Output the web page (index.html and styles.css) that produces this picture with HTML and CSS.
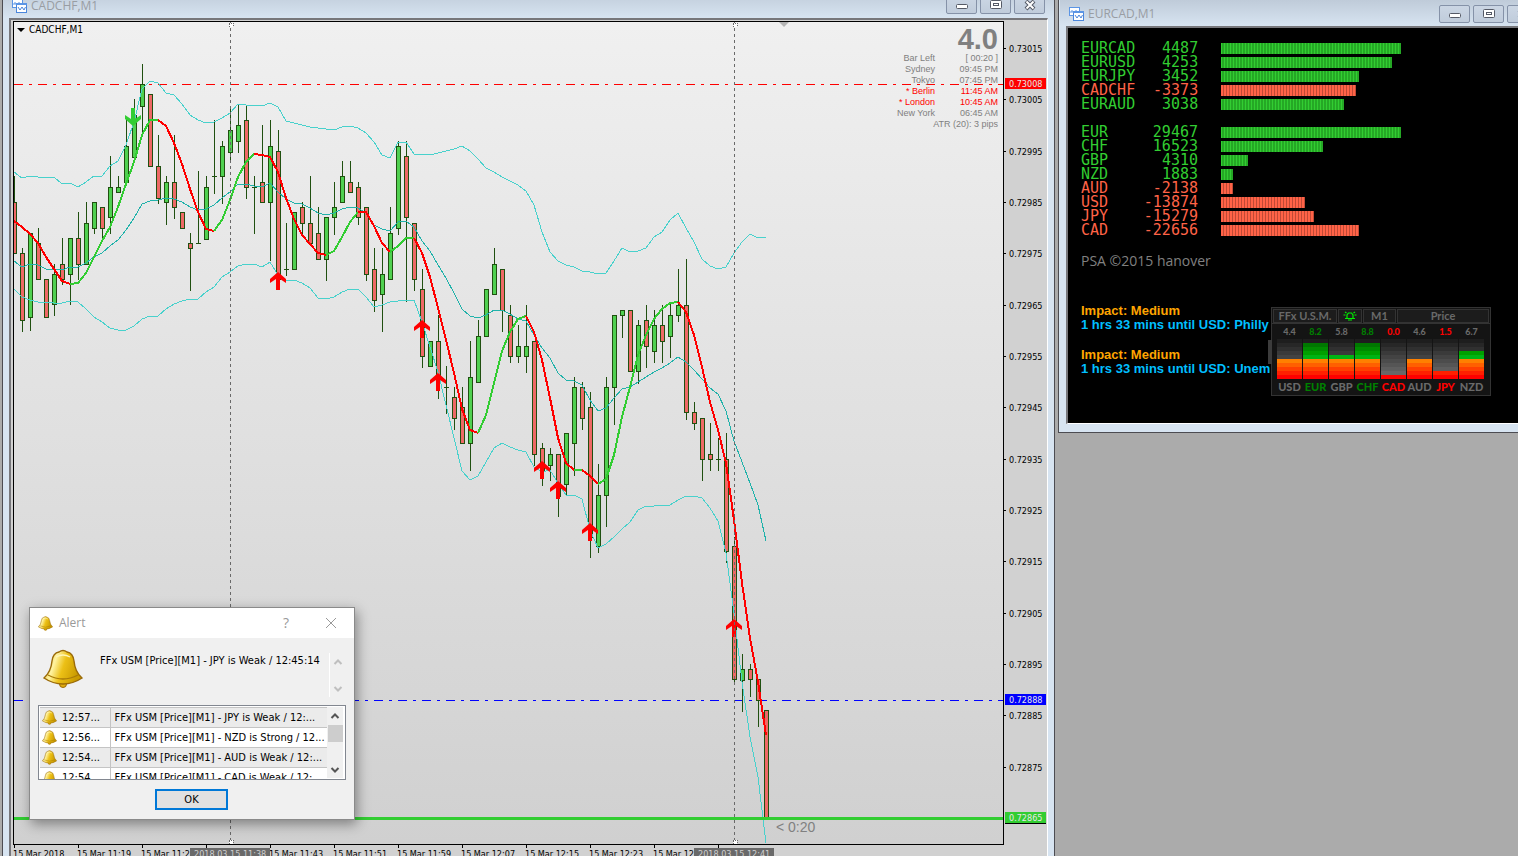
FILE: index.html
```html
<!DOCTYPE html>
<html lang="en">
<head>
  <meta charset="UTF-8">
  <meta name="viewport" content="width=device-width, initial-scale=1.0">
  <title>CADCHF,M1</title>
  <link rel="stylesheet" href="styles.css">
</head>
<body>
  <svg class="defs" aria-hidden="true">
    <defs>
      <linearGradient id="gold" x1="0" x2="1" y1="0" y2="0.3">
        <stop offset="0" stop-color="#e3b51c"/>
        <stop offset="0.35" stop-color="#fff3a0"/>
        <stop offset="0.6" stop-color="#ecc016"/>
        <stop offset="1" stop-color="#c99a00"/>
      </linearGradient>
      <symbol id="bell" viewBox="0 0 40 40">
        <circle cx="20" cy="35" r="3.5" fill="#e0ad10" stroke="#9a6a08"/>
        <path d="M16 3 Q20 0 24 3 Q30 4 31 12 Q32 23 39 29 Q30 35 20 35 Q10 35 1 29 Q8 23 9 12 Q10 4 16 3Z" fill="url(#gold)" stroke="#9a6a08" stroke-width="1.4"/>
        <path d="M5 26 Q20 34 35 26" fill="none" stroke="#a87a08" stroke-width="1.3"/>
        <path d="M13 8 Q20 4 27 8" fill="none" stroke="#fff6b8" stroke-width="1.4"/>
      </symbol>
      <symbol id="chart-icon" viewBox="0 0 15 14">
        <rect x="0.5" y="0.5" width="10" height="8" fill="#fff" stroke="#5b95e5"/>
        <path d="M0 0.500H11" stroke="#5b95e5"/>
        <path d="M2 6V4h2v2h2V4h2v2" fill="none" stroke="#5b95e5"/>
        <rect x="4.500" y="4.500" width="10" height="9" fill="#fff" stroke="#4a86dc"/>
        <path d="M4 5H15" stroke="#5b95e5" stroke-width="2"/>
        <path d="M6 8l2 3 2-3 2 3 1.500-3" fill="none" stroke="#4a86dc"/>
      </symbol>
      <symbol id="win-min" viewBox="0 0 14 12">
        <rect x="1.500" y="5.500" width="11" height="4" rx="1" fill="#fff" stroke="#555a66"/>
      </symbol>
      <symbol id="win-max" viewBox="0 0 14 12">
        <rect x="1.500" y="1.500" width="11" height="8" rx="1" fill="#fff" stroke="#555a66"/>
        <rect x="4.500" y="4.500" width="5" height="2" fill="#fff" stroke="#555a66"/>
      </symbol>
      <symbol id="win-close" viewBox="0 0 14 12">
        <path d="M3 2l8 8M11 2l-8 8" stroke="#555a66" stroke-width="4"/>
        <path d="M3.500 2.500l7 7M10.500 2.500l-7 7" stroke="#fff" stroke-width="2"/>
      </symbol>
      <symbol id="up" viewBox="0 0 10 8"><path d="M1.500 6L5 2.500 8.500 6" fill="none" stroke="currentColor" stroke-width="2"/></symbol>
      <symbol id="down" viewBox="0 0 10 8"><path d="M1.500 2L5 5.500 8.500 2" fill="none" stroke="currentColor" stroke-width="2"/></symbol>
    </defs>
  </svg>

  <main class="desktop">
    <section class="window chart-window">
      <header class="titlebar">
        <svg class="title-icon"><use href="#chart-icon"/></svg>
        <span class="title">CADCHF,M1</span>
        <button class="win-btn" aria-label="Minimize"><svg><use href="#win-min"/></svg></button>
        <button class="win-btn" aria-label="Maximize"><svg><use href="#win-max"/></svg></button>
        <button class="win-btn" aria-label="Close"><svg><use href="#win-close"/></svg></button>
      </header>
      <div class="frame chart-frame">
        <div class="plot">
          <svg id="plot"></svg>
          <div class="symbol-name"><span class="caret"></span>CADCHF,M1</div>
          <div class="clock">
            <div class="spread">4.0</div>
            <table>
              <tr><td>Bar Left</td><td>[ 00:20 ]</td></tr>
              <tr><td>Sydney</td><td>09:45 PM</td></tr>
              <tr><td>Tokyo</td><td>07:45 PM</td></tr>
              <tr class="open"><td>* Berlin</td><td>11:45 AM</td></tr>
              <tr class="open"><td>* London</td><td>10:45 AM</td></tr>
              <tr><td>New York</td><td>06:45 AM</td></tr>
              <tr><td colspan="2">ATR (20): 3 pips</td></tr>
            </table>
          </div>
        </div>
        <svg class="price-axis" id="priceAxis"></svg>
        <svg class="time-axis" id="timeAxis"></svg>
      </div>
    </section>

    <section class="window side-window">
      <header class="titlebar">
        <svg class="title-icon"><use href="#chart-icon"/></svg>
        <span class="title">EURCAD,M1</span>
        <button class="win-btn" aria-label="Minimize"><svg><use href="#win-min"/></svg></button>
        <button class="win-btn" aria-label="Maximize"><svg><use href="#win-max"/></svg></button>
        <button class="win-btn" aria-label="Close"><svg><use href="#win-close"/></svg></button>
      </header>
      <div class="frame side-frame">
        <table class="strength" id="pairs"></table>
        <table class="strength" id="currencies"></table>
        <p class="credit">PSA ©2015 hanover</p>
        <div class="news">
          <p class="impact">Impact: Medium</p>
          <p>1 hrs 33 mins until USD: Philly</p>
        </div>
        <div class="news">
          <p class="impact">Impact: Medium</p>
          <p>1 hrs 33 mins until USD: Unem</p>
        </div>

        <div class="usm">
          <div class="usm-handle"></div>
          <div class="usm-head">
            <span class="usm-name">FFx U.S.M.</span>
            <button class="usm-bell" aria-label="Alerts">
              <svg viewBox="0 0 14 10"><path d="M4 7V4l1.500-2h3L10 4v3M2 7.500h10M5 9h4M0.500 4h2M11.500 4h2M2 1l1.500 1M12 1l-1.500 1" fill="none" stroke="#00f000" stroke-width="1.200"/></svg>
            </button>
            <button class="usm-frame">M1</button>
            <button class="usm-mode">Price</button>
          </div>
          <div class="usm-body" id="usm"></div>
        </div>
      </div>
    </section>
  </main>

  <section class="alert" role="dialog" aria-label="Alert">
    <header class="alert-title">
      <svg class="bell-small"><use href="#bell"/></svg>
      <span>Alert</span>
      <button aria-label="Help">?</button>
      <button aria-label="Close"><svg viewBox="0 0 12 12"><path d="M1 1l10 10M11 1L1 11" stroke="#999" stroke-width="1"/></svg></button>
    </header>
    <div class="alert-message">
      <svg class="bell-big"><use href="#bell"/></svg>
      <textarea readonly aria-label="Message">FFx USM [Price][M1] - JPY is Weak / 12:45:14</textarea>
      <div class="scroll scroll-off">
        <svg><use href="#up"/></svg>
        <svg><use href="#down"/></svg>
      </div>
    </div>
    <div class="alert-list">
      <table>
        <tr><td><svg class="bell-small"><use href="#bell"/></svg>12:57...</td><td>FFx USM [Price][M1] - JPY is Weak / 12:...</td></tr>
        <tr><td><svg class="bell-small"><use href="#bell"/></svg>12:56...</td><td>FFx USM [Price][M1] - NZD is Strong / 12...</td></tr>
        <tr><td><svg class="bell-small"><use href="#bell"/></svg>12:54...</td><td>FFx USM [Price][M1] - AUD is Weak / 12:...</td></tr>
        <tr><td><svg class="bell-small"><use href="#bell"/></svg>12:54...</td><td>FFx USM [Price][M1] - CAD is Weak / 12:...</td></tr>
      </table>
      <div class="scroll">
        <svg><use href="#up"/></svg>
        <div class="thumb"></div>
        <svg><use href="#down"/></svg>
      </div>
    </div>
    <button class="ok">OK</button>
  </section>

  <script src="chart.js"></script>
</body>
</html>
```
FILE: styles.css
```css
* {
  box-sizing: border-box;
}
body {
  margin: 0;
  height: 100vh;
  overflow: hidden;
  background: #ababab;
  font-family: "DejaVu Sans Condensed", "DejaVu Sans", sans-serif;
  font-size: 10px;
}
p {
  margin: 0;
}
button {
  padding: 0;
  font: inherit;
}
table {
  border-collapse: collapse;
}
td {
  padding: 0;
}
.defs {
  position: absolute;
  width: 0;
  height: 0;
}

/* windows */
.desktop {
  display: flex;
  align-items: flex-start;
  gap: 3px;
  padding-left: 2px;
  height: 100%;
}
.window {
  padding: 0 6px 8px;
  border: 1px solid #4c4c52;
  border-top: none;
  background: #d7e4f1;
}
.chart-window {
  flex: 1;
  min-width: 0;
  margin-top: -8px;
}
.side-window {
  flex: 0 0 490px;
  margin-right: -30px;
  padding-left: 7px;
}
.titlebar {
  display: flex;
  gap: 3px;
  align-items: center;
  height: 26px;
  margin: 0 -6px;
  padding: 0 9px;
  background: linear-gradient(#bfcbd9, #d7e4f1);
}
.title-icon {
  width: 15px;
  height: 14px;
  margin-top: 2px;
}
.title {
  flex: 1;
  padding: 1px 0 0 1px;
  font-family: "Open Sans", sans-serif;
  font-size: 12px;
  color: #999da3;
}
.win-btn {
  align-self: flex-start;
  width: 31px;
  height: 18px;
  margin-top: 5px;
  border: 1px solid #8592a8;
  border-radius: 2px;
  background: linear-gradient(#cbd6e4, #c0ccdb);
}
.chart-window .win-btn {
  margin-top: 4px;
}
.win-btn svg {
  display: block;
  width: 14px;
  height: 12px;
  margin: 1px auto;
}
.frame {
  border: 2px solid #77777b;
  border-right: 1px solid #fff;
  border-bottom: 1px solid #fff;
}

/* chart */
.chart-frame {
  display: grid;
  grid-template-columns: 1fr 43px;
  padding: 1px 0 0 2px;
  background: #d1d1d1;
}
.plot {
  position: relative;
  height: 824px;
  border: 1px solid #000;
  background: linear-gradient(#f0f0f0, #d0d0d0);
}
.plot > svg {
  display: block;
  width: 100%;
  height: 100%;
}
.price-axis {
  width: 43px;
  height: 824px;
}
.time-axis {
  grid-column: 1 / 3;
  width: 100%;
  height: 30px;
}
.price-axis, .time-axis {
  font-size: 9px;
}
.crisp {
  shape-rendering: crispEdges;
}
.line {
  fill: none;
  stroke-width: 1;
  shape-rendering: crispEdges;
}
.outer {
  stroke: #48d1cc;
}
.middle {
  stroke: #20b2aa;
}
.ma {
  stroke-width: 2;
}
.timer {
  font-family: "Liberation Sans", sans-serif;
  font-size: 14px;
  fill: #808080;
}
.symbol-name {
  position: absolute;
  top: 2px;
  left: 3px;
  display: flex;
  align-items: center;
  gap: 4px;
}
.caret {
  border: 4px solid transparent;
  border-top-color: #000;
  border-bottom: none;
}
.clock {
  position: absolute;
  top: 1px;
  right: 5px;
  font-family: "Liberation Sans", sans-serif;
  color: #808080;
  text-align: right;
}
.spread {
  height: 30px;
  font-size: 29px;
  font-weight: bold;
  line-height: 32px;
}
.clock table {
  margin-left: auto;
  font-size: 9px;
  line-height: 11px;
}
.clock td + td {
  width: 63px;
}
.clock .open {
  color: #f00;
}

/* strength window */
.side-frame {
  position: relative;
  height: 398px;
  padding: 13px;
  background: #000;
}
.strength {
  margin-bottom: 14px;
  font-family: "DejaVu Sans Mono", monospace;
  font-size: 15px;
  line-height: 14px;
  color: #32cd32;
}
.strength tr {
  height: 14px;
}
.strength td:first-child {
  width: 54px;
}
.strength td:nth-child(2) {
  width: 63px;
  text-align: right;
}
.strength td:last-child {
  padding-left: 23px;
}
.strength .down {
  color: #ff6347;
}
.bar {
  height: 11px;
  margin-top: 1px;
  background: repeating-linear-gradient(90deg, #32cd32 0 1px, #25a825 1px 3px);
}
.down .bar {
  background: repeating-linear-gradient(90deg, #ff6347 0 2px, #c04a36 2px 3px);
}
.credit {
  margin-bottom: 33px;
  font-family: "Open Sans", sans-serif;
  font-size: 14px;
  line-height: 20px;
  color: #808080;
}
.news {
  margin-bottom: 16px;
  font: bold 13px/14px "Liberation Sans", sans-serif;
  color: #00bfff;
}
.impact {
  color: #ffa500;
}
.usm {
  position: absolute;
  top: 279px;
  left: 203px;
  width: 220px;
  height: 89px;
  border: 1px solid #333;
  background: #141414;
  color: #696969;
  font-family: Lato, sans-serif;
  font-weight: 900;
}
.usm-handle {
  position: absolute;
  top: 32px;
  left: -4px;
  width: 4px;
  height: 24px;
  background: #3c3c3c;
}
.usm-head {
  display: grid;
  grid-template-columns: 64px 24px 33px 1fr;
  gap: 1px;
  height: 16px;
  padding: 1px;
  border-bottom: 1px solid #333;
  font-size: 11px;
  font-weight: bold;
  line-height: 12px;
}
.usm-head > * {
  border: 1px solid #333;
  background: #1c1c1c;
  color: inherit;
  text-align: center;
}
.usm-bell svg {
  display: block;
  width: 14px;
  height: 10px;
  margin: auto;
}
.usm-body {
  display: grid;
  grid-template-columns: repeat(8, 25px);
  gap: 1px;
  padding: 2px 5px;
  text-align: center;
}
.usm-value {
  height: 13px;
  font-size: 9px;
  line-height: 11px;
}
.meter {
  display: flex;
  align-items: flex-end;
  height: 40px;
  background: linear-gradient(#1e1e1e 10%, #272727 10% 20%, #303030 20% 30%, #3a3a3a 30% 40%, #434343 40% 50%, #4c4c4c 50% 60%, #555 60% 70%, #5e5e5e 70% 80%, #676767 80% 90%, #707070 90%);
}
.meter-fill {
  width: 100%;
  background: linear-gradient(#006400 4px, #007800 4px 8px, #008c00 8px 12px, #00a000 12px 16px, #00b414 16px 20px, #ff8000 20px 24px, #ff6000 24px 28px, #ff4000 28px 32px, #ff2000 32px 36px, #f00 36px) bottom / 100% 40px no-repeat;
}
.usm-label {
  font-size: 11px;
  line-height: 16px;
}
.strong {
  color: #008000;
}
.weak {
  color: #f00;
}

/* alert dialog */
.alert {
  position: absolute;
  top: 607px;
  left: 29px;
  width: 326px;
  height: 213px;
  border: 1px solid #8a8a8a;
  background: #f0f0f0;
  box-shadow: 2px 4px 12px rgba(0, 0, 0, 0.4);
  font-size: 11px;
}
.alert-title {
  display: flex;
  align-items: center;
  gap: 6px;
  height: 30px;
  padding: 0 8px;
  background: #fff;
  font-family: "Open Sans", sans-serif;
  font-size: 12px;
  line-height: 16px;
  color: #999;
}
.alert-title span {
  flex: 1;
}
.alert-title button {
  width: 30px;
  height: 28px;
  margin-right: 9px;
  border: none;
  background: none;
  color: #999;
  font-size: 14px;
}
.alert-title button:last-child {
  margin-right: 0;
}
.alert-title button svg {
  display: block;
  width: 12px;
  height: 12px;
  margin: auto;
}
.bell-small {
  width: 15px;
  height: 15px;
}
.bell-big {
  width: 40px;
  height: 40px;
  margin-top: -4px;
}
.alert-message {
  display: flex;
  height: 67px;
  padding: 15px 8px 8px 13px;
}
.alert-message textarea {
  flex: 1;
  height: 44px;
  margin-left: 17px;
  padding: 1px 0;
  border: none;
  border-right: 1px solid #fff;
  background: none;
  font: inherit;
  line-height: 14px;
  resize: none;
  overflow: hidden;
  outline: none;
}
.scroll {
  display: flex;
  flex-direction: column;
  justify-content: space-between;
  align-items: center;
  width: 16px;
  padding: 5px 0 4px;
  background: #f0f0f0;
  color: #555;
}
.scroll svg {
  width: 10px;
  height: 8px;
}
.scroll-off {
  height: 44px;
  color: #bfbfbf;
}
.thumb {
  width: 15px;
  height: 17px;
  margin-bottom: 20px;
  background: #cdcdcd;
}
.alert-list {
  display: flex;
  height: 75px;
  margin: 0 8px;
  padding: 1px 2px 1px 1px;
  border: 1px solid #828790;
  background: #fff;
  overflow: hidden;
}
.alert-list table {
  flex: 1;
  height: 81px;
}
.alert-list td {
  height: 20px;
  border-top: 1px solid #c4c4c4;
  line-height: 16px;
  white-space: nowrap;
}
.alert-list td:first-child {
  width: 70px;
  padding-left: 2px;
  border-right: 1px solid #c4c4c4;
}
.alert-list td:last-child {
  padding-left: 4px;
}
.alert-list tr:nth-child(odd) {
  background: #ebebeb;
}
.alert-list td svg {
  margin-right: 5px;
  vertical-align: middle;
}
.ok {
  display: block;
  width: 73px;
  height: 21px;
  margin: 9px 0 0 125px;
  border: 2px solid #0078d7;
  background: #e1e1e1;
}
```
FILE: chart.js
```javascript
const STEP = 8;
const TOP = 22;

// high, body top, body bottom, low, direction (1 up, -1 down, 0 doji)
const candles = [
  [176,202,253,253,-1],[248,253,320,331,-1],[233,233,317,330,1],[228,243,279,279,-1],[279,279,317,317,-1],
  [264,274,304,315,1],[238,264,279,284,-1],[238,238,274,304,1],[212,238,264,279,-1],[202,223,264,264,1],
  [202,202,228,233,1],[207,207,228,239,-1],[156,187,217,233,1],[176,187,192,192,1],[120,146,182,182,1],
  [99,115,157,157,1],[64,84,106,131,1],[94,94,166,166,-1],[135,166,198,203,-1],[176,182,202,224,1],
  [135,182,207,218,-1],[212,212,228,228,-1],[233,243,248,290,-1],[171,243,243,243,0],[176,187,239,239,1],
  [120,176,176,193,0],[141,146,176,203,1],[106,130,152,162,1],[105,125,141,152,1],[106,120,187,198,-1],
  [176,187,187,233,0],[125,182,202,202,-1],[120,146,202,260,1],[130,151,279,279,-1],[223,269,269,275,0],
  [212,212,269,269,1],[202,207,223,233,-1],[176,223,243,243,-1],[207,233,259,259,-1],[217,217,259,280,1],
  [182,207,217,234,1],[161,176,202,202,1],[161,182,192,192,-1],[182,187,217,224,-1],[207,207,274,280,-1],
  [248,269,300,311,-1],[248,274,294,331,1],[207,233,279,279,1],[141,146,228,234,1],[141,156,217,301,-1],
  [223,223,279,290,-1],[269,289,356,367,-1],[341,341,366,366,1],[315,341,382,398,-1],[366,387,387,413,0],
  [387,397,418,429,-1],[387,407,443,443,-1],[341,377,443,470,1],[320,336,382,382,1],[289,289,336,336,1],
  [248,264,294,294,1],[269,269,310,331,-1],[305,315,356,362,-1],[325,346,356,362,1],[305,346,356,372,1],
  [341,341,454,465,-1],[443,448,470,485,-1],[448,454,465,480,1],[454,454,496,516,-1],[433,433,484,495,1],
  [377,387,443,475,1],[382,387,418,429,-1],[392,407,537,557,-1],[464,495,546,552,1],[377,387,495,526,1],
  [315,315,387,424,1],[310,310,315,337,1],[310,310,371,371,-1],[320,325,371,383,1],[305,320,346,367,-1],
  [310,325,351,362,1],[305,325,341,362,-1],[303,315,336,357,1],[269,305,315,321,1],[259,305,412,419,-1],
  [402,412,423,429,-1],[418,418,459,480,-1],[423,454,459,470,-1],[438,459,459,470,0],[433,459,551,562,-1],
  [537,546,679,682,-1],[654,669,680,711,1],[664,669,679,696,-1],[679,679,700,726,-1],[710,710,817,817,-1]
];

const upper = [172,178,176,177,177,177,184,183,187,182,176,176,166,161,145,122,89,81,83,93,95,104,115,120,123,122,118,113,104,105,105,106,103,107,121,123,125,127,128,129,130,127,126,128,133,142,155,158,142,142,154,154,155,153,151,149,146,151,159,168,172,177,181,185,191,205,232,252,261,265,267,271,272,274,273,261,248,252,251,248,237,232,220,213,228,242,259,266,269,267,253,242,234,238,237];
const middle = [261,267,264,265,269,269,270,267,267,263,257,253,246,240,230,218,204,201,200,198,199,202,207,210,209,205,198,192,184,184,186,187,183,192,199,203,204,208,213,215,213,209,207,208,213,225,229,231,222,221,227,241,251,265,278,293,309,316,318,315,310,310,314,319,321,335,348,358,373,380,381,385,400,411,408,398,389,387,382,377,372,368,363,357,362,370,379,388,394,411,441,462,483,505,541];
const lower = [289,297,300,302,302,303,303,301,302,309,317,322,328,330,330,326,319,316,316,309,304,301,299,299,292,287,277,272,266,264,264,267,262,275,280,280,283,288,298,299,297,292,289,289,297,307,305,302,301,300,300,322,347,372,405,438,471,480,476,462,448,443,447,450,452,467,472,470,483,495,495,499,530,548,544,537,529,522,510,506,506,505,505,500,496,496,498,508,521,553,613,682,737,777,843];
const ma = [221,227,234,243,257,269,281,284,283,273,257,241,227,207,184,162,135,120,120,126,143,164,189,212,229,231,220,200,177,162,154,155,157,172,198,219,235,244,253,255,251,237,222,212,212,226,243,252,246,238,238,253,277,308,340,373,409,430,433,415,383,351,332,319,316,332,360,398,438,463,470,470,476,484,479,455,417,387,355,335,319,309,303,302,312,335,367,402,430,463,520,583,638,682,735];
// candle index at which the average changes colour, starting red
const turns = [0, 7, 18, 25, 30, 39, 43, 47, 50, 58, 64, 70, 71, 73, 83, 94];

function line(values, cls, from = 0, color = '') {
  const pts = values.map((y, i) => `${(i + from) * STEP},${y}`).join(' ');
  return `<polyline class="line ${cls}" points="${pts}"${color ? ` stroke="${color}"` : ''}/>`;
}

function candle([high, top, bottom, low, dir], i) {
  const x = i * STEP;
  let out = `<rect x="${x}" y="${high}" width="1" height="${low - high + 1}" fill="#205010"/>`;
  if (dir === 0) return out + `<rect x="${x - 2}" y="${top}" width="5" height="1" fill="#205010"/>`;
  out += `<rect x="${x - 2}" y="${top}" width="5" height="${bottom - top + 1}" fill="#205010"/>`;
  out += `<rect x="${x - 1}" y="${top + 1}" width="3" height="${bottom - top - 1}" fill="${dir > 0 ? '#50d050' : '#ee6966'}"/>`;
  return out;
}

function arrow(x, y, color, flip) {
  const turn = flip ? ' scale(1,-1)' : '';
  return `<path transform="translate(${x},${y})${turn}" fill="${color}" d="M0 0L8 7V11L2 7V18H-2V7L-8 11V7Z"/>`;
}

function divider(x) {
  return `<path d="M${x}.5 ${TOP}V844" stroke="#696969" stroke-dasharray="3 3" class="crisp"/>
    <path d="M${x - 1} 27V23H${x + 3}V27M${x - 1} 844V840H${x + 3}V844" fill="#fff" stroke="#696969" stroke-dasharray="1 1" class="crisp"/>`;
}

function level(y, color) {
  return `<path d="M0 ${y}.5H4000" stroke="${color}" stroke-dasharray="9 6 3 6" class="crisp"/>`;
}

let plot = `<g transform="translate(0,${-TOP})">`;
plot += '<path d="M765 22H775L770 27Z" fill="#b4b4b4"/>';
plot += level(84, '#f00') + level(700, '#00f');
plot += '<g class="crisp">' + candles.map(candle).join('') + '</g>';
plot += line(upper, 'outer') + line(middle, 'middle') + line(lower, 'outer');
for (let i = 0; i < turns.length - 1; i++) {
  plot += line(ma.slice(turns[i], turns[i + 1] + 1), 'ma', turns[i], i % 2 ? '#32cd32' : '#f00');
}
plot += arrow(119, 126, '#32cd32', true);
[[264, 272], [408, 320], [424, 373], [528, 461], [544, 481], [576, 523], [720, 619]].forEach(([x, y]) => {
  plot += arrow(x, y, '#f00');
});
plot += divider(216) + divider(720);
plot += '<rect x="0" y="817" width="4000" height="3" fill="#32cd32"/>';
plot += '<text class="timer" x="762" y="832">&lt; 0:20</text></g>';
document.getElementById('plot').innerHTML = plot;

const prices = [[48, '0.73015'], [99, '0.73005'], [151, '0.72995'], [202, '0.72985'], [253, '0.72975'], [305, '0.72965'],
  [356, '0.72955'], [407, '0.72945'], [459, '0.72935'], [510, '0.72925'], [561, '0.72915'], [613, '0.72905'],
  [664, '0.72895'], [715, '0.72885'], [767, '0.72875']];
const tags = [[83, '0.73008', '#f00'], [699, '0.72888', '#00f'], [817, '0.72865', '#32cd32']];
let axis = '<g transform="translate(0,-21)">';
prices.forEach(([y, text]) => {
  axis += `<rect y="${y}" width="2" height="1"/><text x="5" y="${y + 4}">${text}</text>`;
});
tags.forEach(([y, text, color]) => {
  axis += `<rect x="1" y="${y - 5}" width="41" height="11" fill="${color}"/><text x="5" y="${y + 4}" fill="#e8e8e8">${text}</text>`;
});
axis += '<rect x="1" y="823" width="41" height="1"/></g>';
document.getElementById('priceAxis').innerHTML = axis;

const times = ['2018', '11:19', '11:27', '11:35', '11:43', '11:51', '11:59', '12:07', '12:15', '12:23', '12:31'];
let time = '';
times.forEach((t, i) => {
  time += `<rect x="${1 + i * 64}" width="1" height="3"/>`;
  if (t !== '11:35') time += `<text x="${i * 64}" y="12">15 Mar ${t}</text>`;
});
time += '<rect x="705" width="1" height="3"/>';
[[177, '2018.03.15 11:38'], [681, '2018.03.15 12:41']].forEach(([x, t]) => {
  time += `<rect x="${x}" y="3" width="80" height="12" fill="#696969"/><text x="${x + 4}" y="12" fill="#d0d0d0">${t}</text>`;
});
document.getElementById('timeAxis').innerHTML = time;

function fillTable(id, rows) {
  document.getElementById(id).innerHTML = rows.map(([name, value, width]) =>
    `<tr class="${value < 0 ? 'down' : ''}"><td>${name}</td><td>${value}</td><td><div class="bar" style="width:${width}px"></div></td></tr>`
  ).join('');
}

fillTable('pairs', [['EURCAD', 4487, 180], ['EURUSD', 4253, 171], ['EURJPY', 3452, 138], ['CADCHF', -3373, 135], ['EURAUD', 3038, 123]]);
fillTable('currencies', [['EUR', 29467, 180], ['CHF', 16523, 102], ['GBP', 4310, 27], ['NZD', 1883, 12],
  ['AUD', -2138, 12], ['USD', -13874, 84], ['JPY', -15279, 93], ['CAD', -22656, 138]]);

const meters = [['USD', '4.4', 5], ['EUR', '8.2', 9], ['GBP', '5.8', 6], ['CHF', '8.8', 9], ['CAD', '0.0', 1], ['AUD', '4.6', 5], ['JPY', '1.5', 2], ['NZD', '6.7', 7]];
document.getElementById('usm').innerHTML = meters.map(([name, value, lit]) => {
  const cls = value > 8 ? 'strong' : value < 2 ? 'weak' : '';
  return `<div class="${cls}"><div class="usm-value">${value}</div><div class="meter"><div class="meter-fill" style="height:${lit * 10}%"></div></div><div class="usm-label">${name}</div></div>`;
}).join('');
```
